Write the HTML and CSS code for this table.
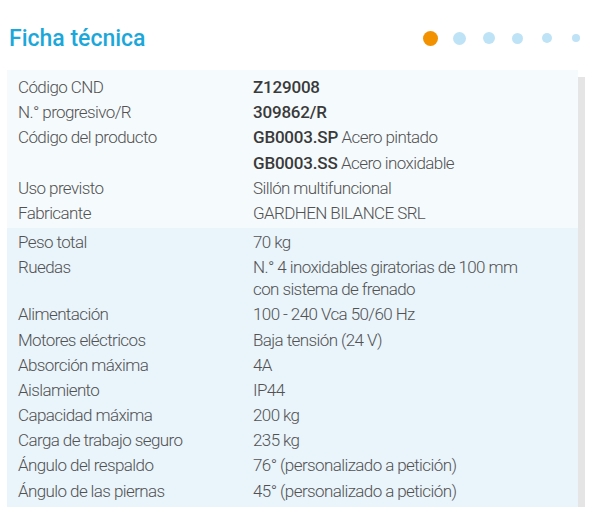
FILE: index.html
```html
<!DOCTYPE html>
<html lang="es">
<head>
<meta charset="utf-8">
<title>Ficha técnica</title>
<link rel="stylesheet" href="styles.css">
</head>
<body>
<div class="page">
  <header class="head">
    <h1 class="title">Ficha técnica</h1>
    <div class="dots">
      <span class="dot dot-on" style="--d:15px"></span>
      <span class="dot" style="--d:13px"></span>
      <span class="dot" style="--d:12px"></span>
      <span class="dot" style="--d:11px"></span>
      <span class="dot" style="--d:10px"></span>
      <span class="dot" style="--d:8px"></span>
    </div>
  </header>
  <div class="card">
    <dl class="sec sec-a">
      <dt>Código CND</dt><dd><b>Z129008</b></dd>
      <dt>N.° progresivo/R</dt><dd><b>309862/R</b></dd>
      <dt>Código del producto</dt><dd><b>GB0003.SP</b> Acero pintado</dd>
      <dt></dt><dd><b>GB0003.SS</b> Acero inoxidable</dd>
      <dt>Uso previsto</dt><dd>Sillón multifuncional</dd>
      <dt>Fabricante</dt><dd>GARDHEN BILANCE SRL</dd>
    </dl>
    <dl class="sec sec-b">
      <dt>Peso total</dt><dd>70 kg</dd>
      <dt>Ruedas</dt><dd>N.° 4 inoxidables giratorias de 100 mm<br>con sistema de frenado</dd>
      <dt>Alimentación</dt><dd>100 - 240 Vca 50/60 Hz</dd>
      <dt>Motores eléctricos</dt><dd>Baja tensión (24 V)</dd>
      <dt>Absorción máxima</dt><dd>4A</dd>
      <dt>Aislamiento</dt><dd>IP44</dd>
      <dt>Capacidad máxima</dt><dd>200 kg</dd>
      <dt>Carga de trabajo seguro</dt><dd>235 kg</dd>
      <dt>Ángulo del respaldo</dt><dd>76° (personalizado a petición)</dd>
      <dt>Ángulo de las piernas</dt><dd>45° (personalizado a petición)</dd>
    </dl>
  </div>
</div>
</body>
</html>
```
FILE: styles.css
```css
html, body {
  margin: 0;
  padding: 0;
  background: #ffffff;
}
.page {
  padding: 20px 0 0 7px;
  font-family: Roboto, "Liberation Sans", sans-serif;
}
.head {
  width: 583px;
  height: 36px;
  display: flex;
  align-items: center;
  justify-content: space-between;
  margin-bottom: 14px;
}
.title {
  margin: 0 0 0 2px;
  font-size: 23px;
  font-weight: 500;
  color: #1ba7da;
  letter-spacing: 0;
}
.dots {
  display: flex;
}
.dot {
  width: 29px;
  height: 16px;
  display: flex;
  align-items: center;
  justify-content: center;
}
.dot::before {
  content: "";
  width: var(--d);
  height: var(--d);
  border-radius: 50%;
  background: #bfe3f6;
}
.dot-on::before {
  background: #f39200;
}
.card {
  width: 571px;
  box-shadow: 7px 7px 0 #e5e5e5;
}
.sec {
  margin: 0;
  display: grid;
  grid-template-columns: 235px 1fr;
  row-gap: 3.2px;
  padding-left: 11px;
  font-size: 17px;
  font-weight: 300;
  line-height: 22px;
  color: #525252;
  letter-spacing: -0.6px;
}
.sec dt, .sec dd {
  margin: 0;
}
.sec b {
  font-weight: 500;
  color: #3a3a3a;
  letter-spacing: -0.2px;
}
.sec-a {
  background: #f5fafd;
  padding-top: 6px;
  padding-bottom: 4px;
}
.sec-b {
  background: #e9f4fb;
  padding-top: 3px;
  padding-bottom: 5px;
}
```
